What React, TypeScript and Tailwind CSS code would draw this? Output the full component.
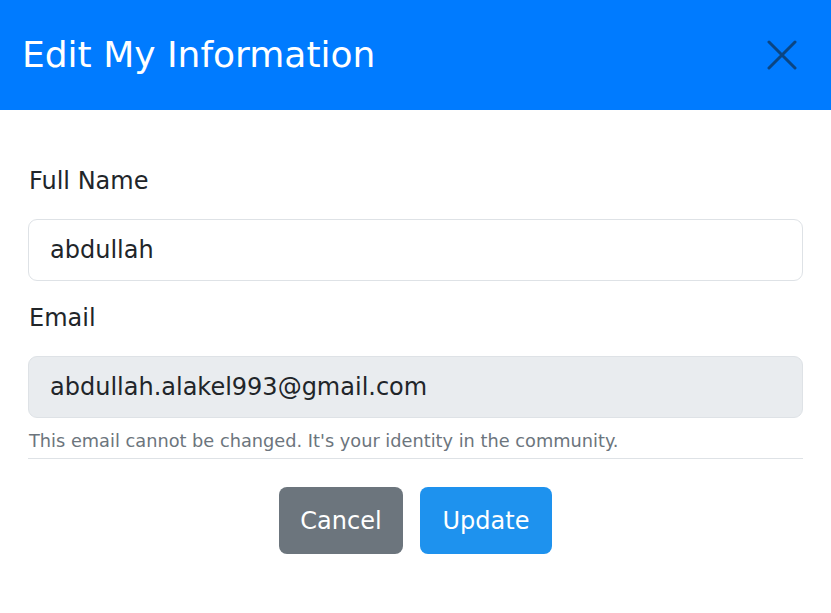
import React from "react";

export default function App() {
  const font = { fontFamily: "'DejaVu Sans', 'Noto Sans', sans-serif" };
  return (
    <div className="w-[831px] h-[613px] bg-white" style={font}>
      <div className="h-[110px] bg-[#007bff] flex items-center justify-between pl-[22px] pr-[34px]">
        <h1 className="text-white text-[36px] leading-none font-normal">Edit My Information</h1>
        <svg width="30" height="30" viewBox="0 0 30 30" className="shrink-0">
          <path d="M2 2 L28 28 M28 2 L2 28" stroke="#0a4583" strokeWidth="3" strokeLinecap="round" />
        </svg>
      </div>
      <div className="px-[28px] pt-[53px]">
        <label className="block text-[24px] leading-[36px] text-[#212529] pl-[1px]">Full Name</label>
        <div className="mt-[20px] h-[62px] border border-[#dee2e6] rounded-[9px] flex items-center px-[21px] text-[24px] text-[#212529]">
          abdullah
        </div>
        <label className="block mt-[19px] text-[24px] leading-[36px] text-[#212529] pl-[1px]">Email</label>
        <div className="mt-[20px] h-[62px] border border-[#dee2e6] bg-[#e9ecef] rounded-[9px] flex items-center px-[21px] text-[24px] text-[#212529]">
          abdullah.alakel993@gmail.com
        </div>
        <p className="mt-[10px] text-[17.75px] leading-[27px] text-[#6c757d] pl-[1px]">
          This email cannot be changed. It's your identity in the community.
        </p>
        <div className="mt-[3px] h-px bg-[#dee2e6]" />
        <div className="mt-[28px] flex justify-center gap-[17px]">
          <button className="w-[124px] h-[67px] rounded-[8px] bg-[#6c757d] text-white text-[24px]">Cancel</button>
          <button className="w-[132px] h-[67px] rounded-[8px] bg-[#1e92ee] text-white text-[24px]">Update</button>
        </div>
      </div>
    </div>
  );
}
